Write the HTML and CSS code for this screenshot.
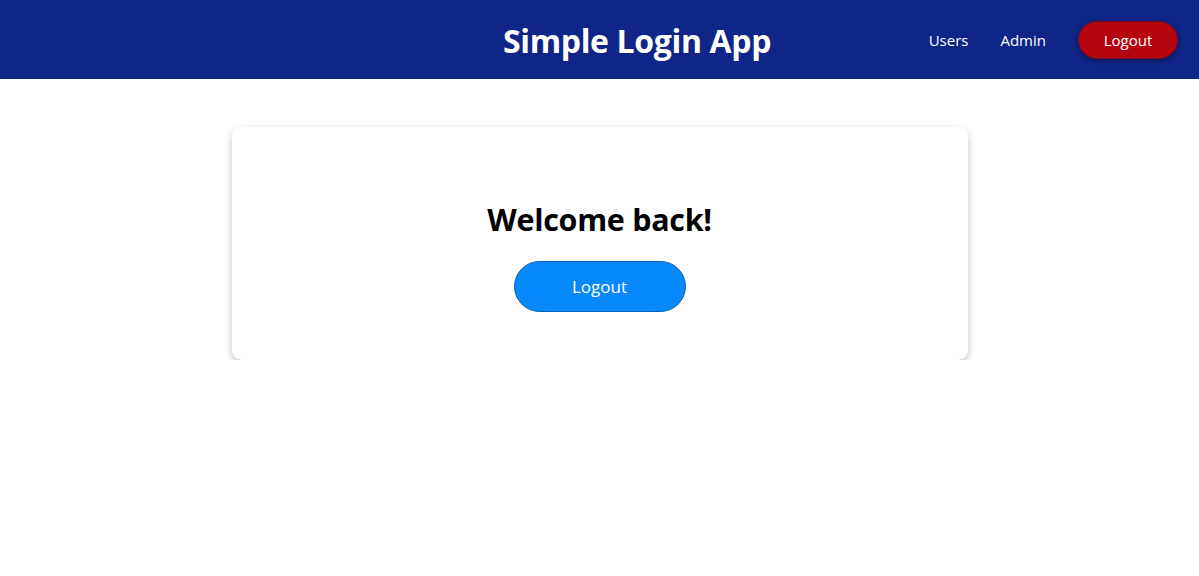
FILE: index.html
```html
<!DOCTYPE html>
<html lang="en">
<head>
<meta charset="utf-8">
<title>Simple Login App</title>
<link rel="stylesheet" href="styles.css">
</head>
<body>
  <header class="header">
    <h1 class="brand">Simple Login App</h1>
    <nav class="nav">
      <a class="nav-link" href="#">Users</a>
      <a class="nav-link" href="#">Admin</a>
      <button class="btn-logout-nav" type="button">Logout</button>
    </nav>
  </header>
  <main class="main">
    <section class="card">
      <h2 class="welcome">Welcome back!</h2>
      <button class="btn-logout" type="button">Logout</button>
    </section>
  </main>
</body>
</html>
```

FILE: styles.css
```css
* { box-sizing: border-box; }
html, body { margin: 0; padding: 0; }
body {
  font-family: "Open Sans", "Noto Sans", "Liberation Sans", sans-serif;
  background: #ffffff;
  color: #000;
}
.header {
  height: 79px;
  background: #0f2587;
  display: flex;
  align-items: center;
  padding: 0 21px 0 503px;
}
.brand {
  margin: 0;
  color: #fff;
  font-size: 32px;
  font-weight: 700;
  letter-spacing: -0.35px;
  line-height: 1;
  padding-top: 3px;
}
.nav {
  margin-left: auto;
  display: flex;
  align-items: center;
}
.nav-link {
  color: #fff;
  text-decoration: none;
  font-size: 15px;
  margin-right: 32px;
}
.btn-logout-nav {
  width: 100px;
  height: 38px;
  border-radius: 19px;
  border: 1px solid #7a0a12;
  background: #b5050f;
  color: #fff;
  font-family: inherit;
  font-size: 15px;
  box-shadow: 0 2px 5px rgba(0, 0, 0, 0.35);
  cursor: pointer;
}
.main {
  display: flex;
  justify-content: center;
  padding-top: 48px;
}
.card {
  width: 736px;
  height: 233px;
  background: #fff;
  border-radius: 10px;
  box-shadow: 0 4px 9px rgba(0, 0, 0, 0.24);
  display: flex;
  flex-direction: column;
  align-items: center;
  padding-top: 72px;
}
.welcome {
  margin: 0 0 22px;
  font-size: 30.5px;
  font-weight: 700;
  letter-spacing: -0.3px;
  line-height: 40px;
}
.btn-logout {
  width: 172px;
  height: 51px;
  border-radius: 26px;
  border: 1px solid #0760b8;
  background: #0788fb;
  color: #fff;
  font-family: inherit;
  font-size: 17px;
  cursor: pointer;
}
```
